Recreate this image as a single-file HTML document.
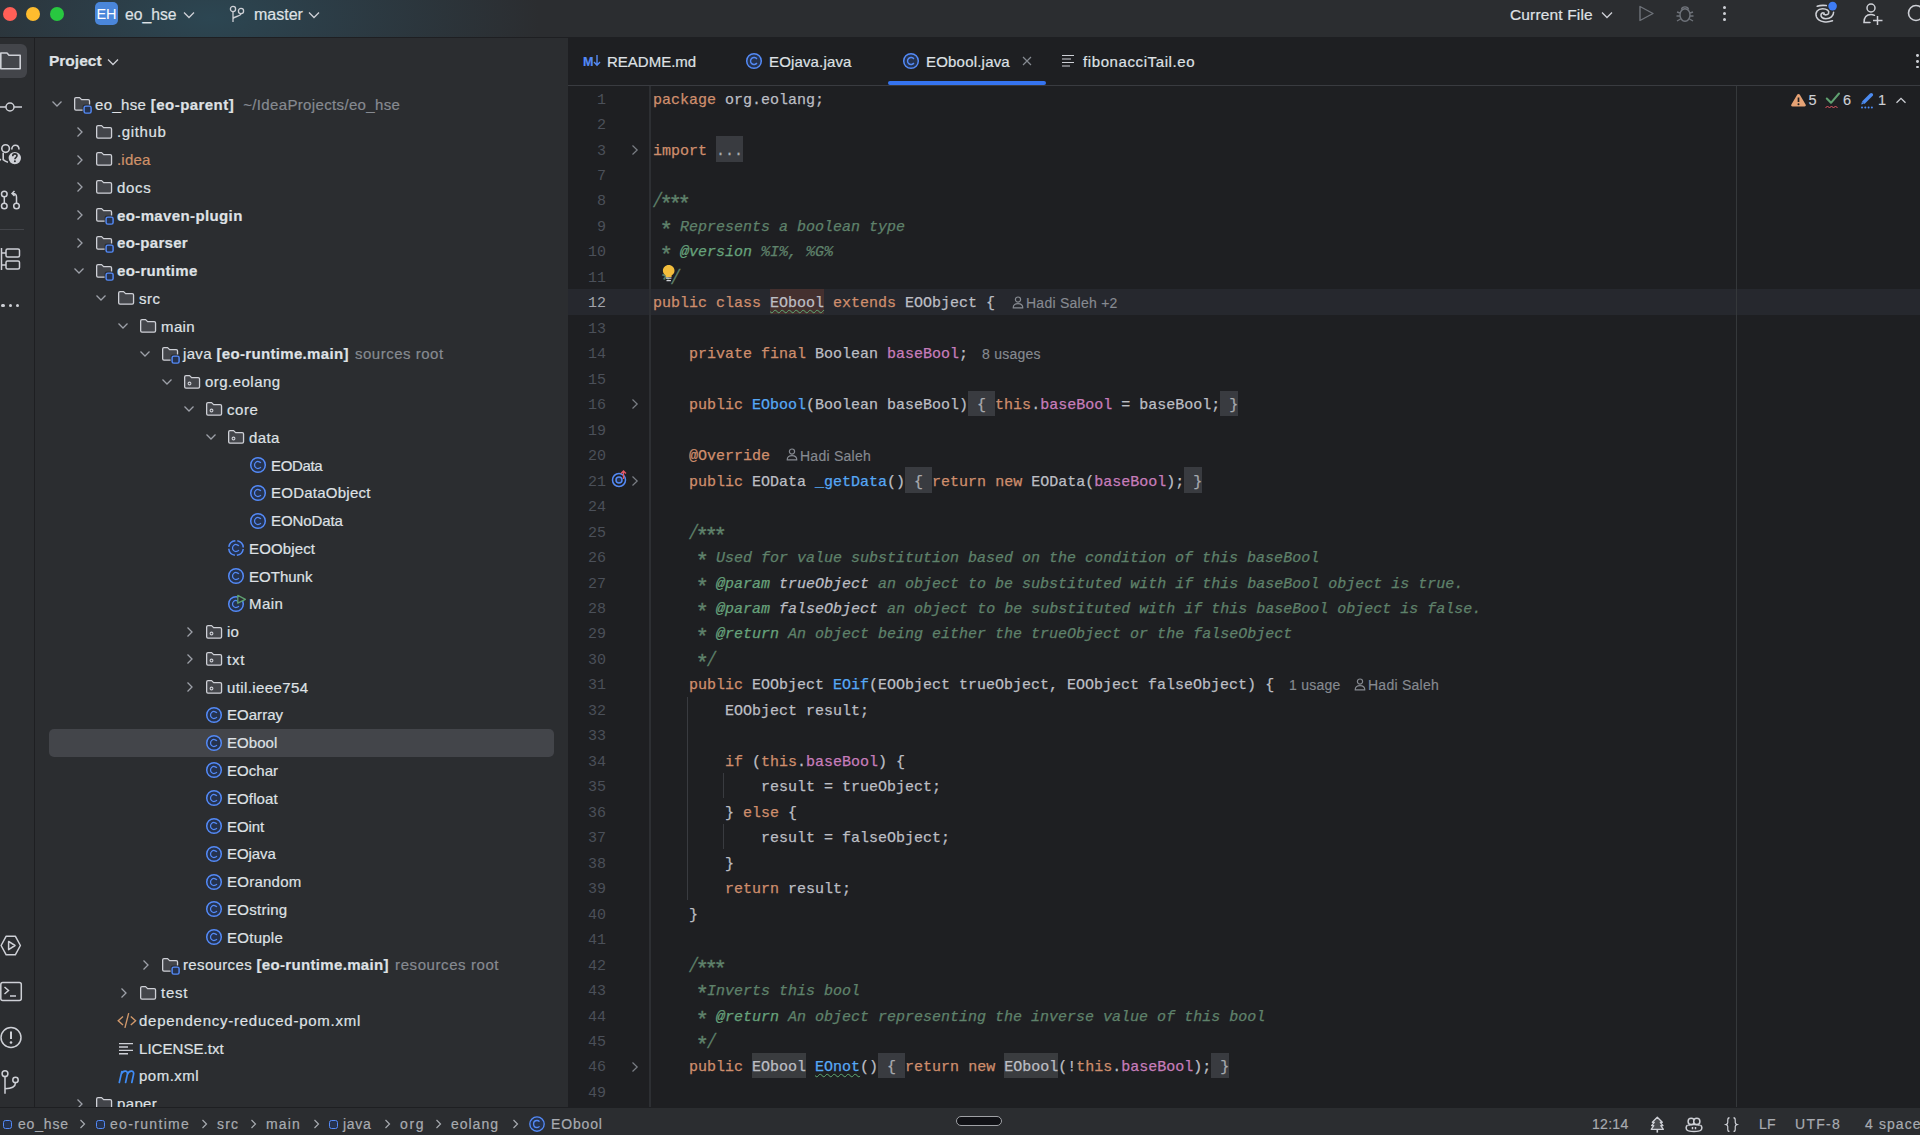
<!DOCTYPE html><html><head><meta charset="utf-8"><style>
*{margin:0;padding:0;box-sizing:border-box}
html,body{width:1920px;height:1135px;overflow:hidden;background:#2B2D30;font-family:"Liberation Sans", sans-serif;}
.a{position:absolute}
svg{position:absolute;overflow:visible}
.t{position:absolute;white-space:pre;color:#DFE1E5;font-size:15px;line-height:20px;-webkit-text-stroke:0.2px currentColor}
.m{position:absolute;white-space:pre;font-family:"Liberation Mono", monospace;font-size:15px;line-height:20px;color:#BCBEC4;-webkit-text-stroke:0.25px currentColor}
.kw{color:#CF8E6D}
.dc{color:#5F826B;font-style:italic}
.dt{color:#67A37C;font-style:italic}
.dp{color:#BCBEC4;font-style:italic}
.fn{color:#56A8F5}
.ast{display:inline-block;font-style:normal;transform:translate(-0.3px,4.6px) scale(1.45)}
.sl{display:inline-block;transform:translateY(1.3px) scaleY(1.3)}
.fd{color:#C77DBB}
.fo{background:#393B41;color:#7A7E85}
.hl{background:#373B39}
.ln{position:absolute;white-space:pre;font-family:"Liberation Mono", monospace;font-size:15px;line-height:20px;color:#4B5059;text-align:right;width:40px}
.ih{position:absolute;white-space:pre;font-family:"Liberation Sans", sans-serif;font-size:14px;line-height:20px;color:#868A91;-webkit-text-stroke:0.15px currentColor}
.g{color:#868A91}
.b{font-weight:bold}
</style></head><body>
<div class="a" style="left:0;top:0;width:1920px;height:37px;background:#2B2D30"></div>
<div class="a" style="left:0;top:0;width:1100px;height:37px;background:radial-gradient(ellipse 330px 140px at 210px 18px, rgba(44,70,82,1) 0%, rgba(44,64,75,0.8) 38%, rgba(43,45,48,0) 100%)"></div>
<div class="a" style="left:0;top:37px;width:1920px;height:1px;background:#1E1F22"></div>
<div class="a" style="left:3px;top:6.5px;width:14px;height:14px;border-radius:50%;background:#FF5F57"></div>
<div class="a" style="left:26px;top:6.5px;width:14px;height:14px;border-radius:50%;background:#FEBC2E"></div>
<div class="a" style="left:50px;top:6.5px;width:14px;height:14px;border-radius:50%;background:#28C840"></div>
<div class="a" style="left:95px;top:2px;width:23px;height:23px;border-radius:5px;background:#4A86DA;color:#fff;font-size:14.5px;line-height:25px;text-align:center;font-family:"Liberation Sans", sans-serif;letter-spacing:-0.3px">EH</div>
<div class="t" style="left:125px;top:5px;font-size:15.7px">eo_hse</div>
<svg style="left:183px;top:11px" width="12" height="8" viewBox="0 0 12 8" ><path d="M1 1.5 L6 6.5 L11 1.5" fill="none" stroke="#CED0D6" stroke-width="1.3"/></svg>
<svg style="left:229px;top:5px" width="16" height="18" viewBox="0 0 16 18" ><circle cx="4" cy="4" r="2.6" fill="none" stroke="#CED0D6" stroke-width="1.3"/><circle cx="12" cy="6" r="2.6" fill="none" stroke="#CED0D6" stroke-width="1.3"/><path d="M4 6.6 V17 M12 8.6 C12 12 4 11 4 14" fill="none" stroke="#CED0D6" stroke-width="1.3"/></svg>
<div class="t" style="left:254px;top:5px;font-size:16px">master</div>
<svg style="left:308px;top:11px" width="12" height="8" viewBox="0 0 12 8" ><path d="M1 1.5 L6 6.5 L11 1.5" fill="none" stroke="#CED0D6" stroke-width="1.3"/></svg>
<div class="t" style="left:1510px;top:4.7px;font-size:15.5px;letter-spacing:0.15px">Current File</div>
<svg style="left:1601px;top:11px" width="12" height="8" viewBox="0 0 12 8" ><path d="M1 1.5 L6 6.5 L11 1.5" fill="none" stroke="#CED0D6" stroke-width="1.3"/></svg>
<svg style="left:1638px;top:5px" width="17" height="17" viewBox="0 0 17 17" ><path d="M2 1.5 L15 8.5 L2 15.5 Z" fill="none" stroke="#6F737A" stroke-width="1.4" stroke-linejoin="round"/></svg>
<svg style="left:1675px;top:4px" width="20" height="19" viewBox="0 0 20 19" ><ellipse cx="10" cy="11" rx="5" ry="6.3" fill="none" stroke="#6F737A" stroke-width="1.4"/><path d="M6.5 5.5 C7 2 13 2 13.5 5.5 M2 8 L5 9 M18 8 L15 9 M1.5 12 H5 M18.5 12 H15 M2 17 L5.5 15 M18 17 L14.5 15" fill="none" stroke="#6F737A" stroke-width="1.4"/></svg>
<div class="a" style="left:1722.5px;top:6.0px;width:3px;height:3px;border-radius:50%;background:#CED0D6"></div>
<div class="a" style="left:1722.5px;top:12.25px;width:3px;height:3px;border-radius:50%;background:#CED0D6"></div>
<div class="a" style="left:1722.5px;top:18.25px;width:3px;height:3px;border-radius:50%;background:#CED0D6"></div>
<svg style="left:1810px;top:0px" width="30" height="28" viewBox="0 0 30 28" ><path d="M7.2 6.3 C10 5.3 13 5.2 16.3 5.6 M22.5 20.8 C18 22.5 9 22.8 6.5 17 C4.7 12 8 8.8 12.5 8.8 C17 8.8 19.5 11 18.6 13.3 C17.8 15 15 15.3 13.6 14.2 M23.6 12.3 C23.6 16 20.5 18.8 15.8 18.8 C12.2 18.8 10.6 16.5 11 14.6 C11.4 12.8 13 12.4 14.2 13.2" fill="none" stroke="#CED0D6" stroke-width="1.55" stroke-linecap="round"/><circle cx="22.6" cy="6.1" r="4.3" fill="#3E7CF5"/></svg>
<svg style="left:1862px;top:3px" width="22" height="22" viewBox="0 0 22 22" ><circle cx="9" cy="5" r="4" fill="none" stroke="#CED0D6" stroke-width="1.5"/><path d="M8 19.5 H2 C2 14 5 11.5 9 11.5 C10.5 11.5 11.5 11.8 12.5 12.3" fill="none" stroke="#CED0D6" stroke-width="1.5" stroke-linecap="round"/><path d="M15.5 13 V22 M11 17.5 H20.5" fill="none" stroke="#CED0D6" stroke-width="1.5"/></svg>
<svg style="left:1900px;top:3px" width="20" height="22" viewBox="0 0 20 22" ><circle cx="16" cy="10" r="7.5" fill="none" stroke="#CED0D6" stroke-width="1.6"/></svg>
<div class="a" style="left:34px;top:38px;width:1px;height:1070px;background:#1E1F22"></div>
<div class="a" style="left:-6px;top:44px;width:33px;height:34px;border-radius:6px;background:#43454A"></div>
<svg style="left:0px;top:50px" width="24" height="22" viewBox="0 0 24 22" ><path d="M0.8 3 H7 L9 5.2 H20.2 V18.8 H0.8 Z" fill="#43454A" stroke="#CED0D6" stroke-width="1.6" stroke-linejoin="round"/></svg>
<svg style="left:0px;top:98px" width="24" height="18" viewBox="0 0 24 18" ><circle cx="10" cy="9" r="4" fill="none" stroke="#CED0D6" stroke-width="1.5"/><path d="M0 9 H6 M14 9 H22" stroke="#CED0D6" stroke-width="1.5"/></svg>
<svg style="left:0px;top:138px" width="24" height="30" viewBox="0 0 24 30" ><circle cx="5.6" cy="10.6" r="3.8" fill="none" stroke="#CED0D6" stroke-width="1.6"/><path d="M11.8 11.4 C11.8 9 13.4 7.2 15.4 7.2 C17.5 7.2 19 9 19 11.6" fill="none" stroke="#CED0D6" stroke-width="1.6"/><path d="M3.2 14.8 V21.6 C4.5 22.8 6 23.6 8 24.2 M-1 21 L1 22" fill="none" stroke="#CED0D6" stroke-width="1.6"/><circle cx="14.8" cy="20.1" r="7.6" fill="#2B2D30"/><circle cx="14.8" cy="20.1" r="6.2" fill="#CED0D6"/><path d="M12.7 18.2 C12.7 16.6 13.6 15.9 14.8 15.9 C16.1 15.9 17 16.7 17 17.8 C17 19.3 14.9 19.4 14.9 21.2" fill="none" stroke="#2B2D30" stroke-width="1.6"/><circle cx="14.9" cy="23.3" r="1" fill="#2B2D30"/></svg>
<svg style="left:0px;top:188px" width="22" height="24" viewBox="0 0 22 24" ><circle cx="4.3" cy="6" r="2.8" fill="none" stroke="#CED0D6" stroke-width="1.5"/><circle cx="4.3" cy="18" r="2.8" fill="none" stroke="#CED0D6" stroke-width="1.5"/><circle cx="16.5" cy="18" r="2.8" fill="none" stroke="#CED0D6" stroke-width="1.5"/><path d="M4.3 8.8 V15.2 M16.5 15.2 V9 C16.5 7 15.5 5.5 12.5 5.5 M14.5 3 L12 5.5 L14.5 8" fill="none" stroke="#CED0D6" stroke-width="1.5"/></svg>
<div class="a" style="left:0;top:229px;width:24px;height:1px;background:#43454A"></div>
<svg style="left:0px;top:247px" width="22" height="24" viewBox="0 0 22 24" ><path d="M1.5 1 V23 M1.5 6 H6 M1.5 18 H6" fill="none" stroke="#CED0D6" stroke-width="1.5"/><rect x="6" y="2" width="13.5" height="8" rx="1.5" fill="none" stroke="#CED0D6" stroke-width="1.5"/><rect x="6" y="14" width="13.5" height="8" rx="1.5" fill="none" stroke="#CED0D6" stroke-width="1.5"/></svg>
<div class="a" style="left:1.4px;top:303.8px;width:3.2px;height:3.2px;border-radius:50%;background:#CED0D6"></div>
<div class="a" style="left:8.9px;top:303.8px;width:3.2px;height:3.2px;border-radius:50%;background:#CED0D6"></div>
<div class="a" style="left:15.9px;top:303.8px;width:3.2px;height:3.2px;border-radius:50%;background:#CED0D6"></div>
<svg style="left:0px;top:934px" width="24" height="24" viewBox="0 0 24 24" ><path d="M6.2 2.2 H15.3 L20.4 11.5 L15.3 20.8 H6.2 L1.1 11.5 Z" fill="none" stroke="#CED0D6" stroke-width="1.5" stroke-linejoin="round"/><path d="M8.6 7.4 L15 11.5 L8.6 15.6 Z" fill="none" stroke="#CED0D6" stroke-width="1.5" stroke-linejoin="round"/></svg>
<svg style="left:0px;top:981px" width="24" height="22" viewBox="0 0 24 22" ><rect x="0.8" y="1.5" width="20.5" height="18" rx="2" fill="none" stroke="#CED0D6" stroke-width="1.5"/><path d="M4.5 6 L8.5 9.5 L4.5 13 M10 15 H16" fill="none" stroke="#CED0D6" stroke-width="1.5"/></svg>
<svg style="left:0px;top:1026px" width="24" height="24" viewBox="0 0 24 24" ><circle cx="11" cy="11.5" r="10" fill="none" stroke="#CED0D6" stroke-width="1.5"/><path d="M11 5.5 V13" stroke="#CED0D6" stroke-width="2"/><circle cx="11" cy="16.5" r="1.3" fill="#CED0D6"/></svg>
<svg style="left:0px;top:1066px" width="24" height="30" viewBox="0 0 24 30" ><circle cx="5" cy="7.7" r="2.9" fill="none" stroke="#CED0D6" stroke-width="1.5"/><circle cx="15.5" cy="13.9" r="2.7" fill="none" stroke="#CED0D6" stroke-width="1.5"/><path d="M5 10.6 V27.7 M15.5 16.6 C15.5 20.5 12.5 22.8 5 22.8" fill="none" stroke="#CED0D6" stroke-width="1.5"/></svg>
<div class="t b" style="left:49px;top:51px;font-size:15.5px">Project</div>
<svg style="left:107px;top:58px" width="12" height="8" viewBox="0 0 12 8" ><path d="M1 1.5 L6 6.5 L11 1.5" fill="none" stroke="#CED0D6" stroke-width="1.3"/></svg>
<div class="a" style="left:49px;top:728.71px;width:505px;height:28px;border-radius:5px;background:#43454A"></div>
<svg style="left:51px;top:100.0px" width="12" height="8" viewBox="0 0 12 8" ><path d="M1.5 1.5 L6 6 L10.5 1.5" fill="none" stroke="#9DA0A8" stroke-width="1.3"/></svg>
<svg style="left:74px;top:96.9px" width="18" height="18" viewBox="0 0 18 18" ><path d="M0.65 2 Q0.65 0.65 2 0.65 H5.6 L7.6 2.6 H14.2 Q15.55 2.6 15.55 4 V11.8 Q15.55 13.15 14.2 13.15 H2 Q0.65 13.15 0.65 11.8 Z" fill="#43454A" stroke="#CED0D6" stroke-width="1.3" stroke-linejoin="round"/><rect x="8.6" y="7.6" width="10" height="10" rx="2" fill="#2B2D30"/><rect x="10.1" y="9.1" width="7" height="7" rx="1.7" fill="#25324D" stroke="#548AF7" stroke-width="1.45"/></svg>
<div class="t" style="left:95px;top:94.50px;letter-spacing:0.35px">eo_hse <span class="b" style="letter-spacing:0.45px">[eo-parent]</span><span class="g">  ~/IdeaProjects/eo_hse</span></div>
<svg style="left:75.7px;top:125.77000000000001px" width="8" height="12" viewBox="0 0 8 12" ><path d="M1.5 1.5 L6 6 L1.5 10.5" fill="none" stroke="#9DA0A8" stroke-width="1.3"/></svg>
<svg style="left:96px;top:124.67000000000002px" width="18" height="18" viewBox="0 0 18 18" ><path d="M0.65 2 Q0.65 0.65 2 0.65 H5.6 L7.6 2.6 H14.2 Q15.55 2.6 15.55 4 V11.8 Q15.55 13.15 14.2 13.15 H2 Q0.65 13.15 0.65 11.8 Z" fill="#43454A" stroke="#CED0D6" stroke-width="1.3" stroke-linejoin="round"/></svg>
<div class="t" style="left:117px;top:122.27px;letter-spacing:0.65px">.github</div>
<svg style="left:75.7px;top:153.54px" width="8" height="12" viewBox="0 0 8 12" ><path d="M1.5 1.5 L6 6 L1.5 10.5" fill="none" stroke="#9DA0A8" stroke-width="1.3"/></svg>
<svg style="left:96px;top:152.44px" width="18" height="18" viewBox="0 0 18 18" ><path d="M0.65 2 Q0.65 0.65 2 0.65 H5.6 L7.6 2.6 H14.2 Q15.55 2.6 15.55 4 V11.8 Q15.55 13.15 14.2 13.15 H2 Q0.65 13.15 0.65 11.8 Z" fill="#43454A" stroke="#CED0D6" stroke-width="1.3" stroke-linejoin="round"/></svg>
<div class="t" style="left:117px;top:150.04px;letter-spacing:0.2px"><span style="color:#D0926A">.idea</span></div>
<svg style="left:75.7px;top:181.31px" width="8" height="12" viewBox="0 0 8 12" ><path d="M1.5 1.5 L6 6 L1.5 10.5" fill="none" stroke="#9DA0A8" stroke-width="1.3"/></svg>
<svg style="left:96px;top:180.21px" width="18" height="18" viewBox="0 0 18 18" ><path d="M0.65 2 Q0.65 0.65 2 0.65 H5.6 L7.6 2.6 H14.2 Q15.55 2.6 15.55 4 V11.8 Q15.55 13.15 14.2 13.15 H2 Q0.65 13.15 0.65 11.8 Z" fill="#43454A" stroke="#CED0D6" stroke-width="1.3" stroke-linejoin="round"/></svg>
<div class="t" style="left:117px;top:177.81px;letter-spacing:0.68px">docs</div>
<svg style="left:75.7px;top:209.07999999999998px" width="8" height="12" viewBox="0 0 8 12" ><path d="M1.5 1.5 L6 6 L1.5 10.5" fill="none" stroke="#9DA0A8" stroke-width="1.3"/></svg>
<svg style="left:96px;top:207.98px" width="18" height="18" viewBox="0 0 18 18" ><path d="M0.65 2 Q0.65 0.65 2 0.65 H5.6 L7.6 2.6 H14.2 Q15.55 2.6 15.55 4 V11.8 Q15.55 13.15 14.2 13.15 H2 Q0.65 13.15 0.65 11.8 Z" fill="#43454A" stroke="#CED0D6" stroke-width="1.3" stroke-linejoin="round"/><rect x="8.6" y="7.6" width="10" height="10" rx="2" fill="#2B2D30"/><rect x="10.1" y="9.1" width="7" height="7" rx="1.7" fill="#25324D" stroke="#548AF7" stroke-width="1.45"/></svg>
<div class="t" style="left:117px;top:205.58px;letter-spacing:0.38px"><span class="b" style="letter-spacing:0.38px">eo-maven-plugin</span></div>
<svg style="left:75.7px;top:236.85px" width="8" height="12" viewBox="0 0 8 12" ><path d="M1.5 1.5 L6 6 L1.5 10.5" fill="none" stroke="#9DA0A8" stroke-width="1.3"/></svg>
<svg style="left:96px;top:235.75px" width="18" height="18" viewBox="0 0 18 18" ><path d="M0.65 2 Q0.65 0.65 2 0.65 H5.6 L7.6 2.6 H14.2 Q15.55 2.6 15.55 4 V11.8 Q15.55 13.15 14.2 13.15 H2 Q0.65 13.15 0.65 11.8 Z" fill="#43454A" stroke="#CED0D6" stroke-width="1.3" stroke-linejoin="round"/><rect x="8.6" y="7.6" width="10" height="10" rx="2" fill="#2B2D30"/><rect x="10.1" y="9.1" width="7" height="7" rx="1.7" fill="#25324D" stroke="#548AF7" stroke-width="1.45"/></svg>
<div class="t" style="left:117px;top:233.35px;letter-spacing:0.29px"><span class="b" style="letter-spacing:0.29px">eo-parser</span></div>
<svg style="left:73px;top:266.62px" width="12" height="8" viewBox="0 0 12 8" ><path d="M1.5 1.5 L6 6 L10.5 1.5" fill="none" stroke="#9DA0A8" stroke-width="1.3"/></svg>
<svg style="left:96px;top:263.52px" width="18" height="18" viewBox="0 0 18 18" ><path d="M0.65 2 Q0.65 0.65 2 0.65 H5.6 L7.6 2.6 H14.2 Q15.55 2.6 15.55 4 V11.8 Q15.55 13.15 14.2 13.15 H2 Q0.65 13.15 0.65 11.8 Z" fill="#43454A" stroke="#CED0D6" stroke-width="1.3" stroke-linejoin="round"/><rect x="8.6" y="7.6" width="10" height="10" rx="2" fill="#2B2D30"/><rect x="10.1" y="9.1" width="7" height="7" rx="1.7" fill="#25324D" stroke="#548AF7" stroke-width="1.45"/></svg>
<div class="t" style="left:117px;top:261.12px;letter-spacing:0.31px"><span class="b" style="letter-spacing:0.31px">eo-runtime</span></div>
<svg style="left:95px;top:294.39px" width="12" height="8" viewBox="0 0 12 8" ><path d="M1.5 1.5 L6 6 L10.5 1.5" fill="none" stroke="#9DA0A8" stroke-width="1.3"/></svg>
<svg style="left:118px;top:291.28999999999996px" width="18" height="18" viewBox="0 0 18 18" ><path d="M0.65 2 Q0.65 0.65 2 0.65 H5.6 L7.6 2.6 H14.2 Q15.55 2.6 15.55 4 V11.8 Q15.55 13.15 14.2 13.15 H2 Q0.65 13.15 0.65 11.8 Z" fill="#43454A" stroke="#CED0D6" stroke-width="1.3" stroke-linejoin="round"/></svg>
<div class="t" style="left:139px;top:288.89px;letter-spacing:0.5px">src</div>
<svg style="left:117px;top:322.15999999999997px" width="12" height="8" viewBox="0 0 12 8" ><path d="M1.5 1.5 L6 6 L10.5 1.5" fill="none" stroke="#9DA0A8" stroke-width="1.3"/></svg>
<svg style="left:140px;top:319.05999999999995px" width="18" height="18" viewBox="0 0 18 18" ><path d="M0.65 2 Q0.65 0.65 2 0.65 H5.6 L7.6 2.6 H14.2 Q15.55 2.6 15.55 4 V11.8 Q15.55 13.15 14.2 13.15 H2 Q0.65 13.15 0.65 11.8 Z" fill="#43454A" stroke="#CED0D6" stroke-width="1.3" stroke-linejoin="round"/></svg>
<div class="t" style="left:161px;top:316.66px;letter-spacing:0.38px">main</div>
<svg style="left:139px;top:349.93px" width="12" height="8" viewBox="0 0 12 8" ><path d="M1.5 1.5 L6 6 L10.5 1.5" fill="none" stroke="#9DA0A8" stroke-width="1.3"/></svg>
<svg style="left:162px;top:346.83px" width="18" height="18" viewBox="0 0 18 18" ><path d="M0.65 2 Q0.65 0.65 2 0.65 H5.6 L7.6 2.6 H14.2 Q15.55 2.6 15.55 4 V11.8 Q15.55 13.15 14.2 13.15 H2 Q0.65 13.15 0.65 11.8 Z" fill="#43454A" stroke="#CED0D6" stroke-width="1.3" stroke-linejoin="round"/><rect x="8.6" y="7.6" width="10" height="10" rx="2" fill="#2B2D30"/><rect x="10.1" y="9.1" width="7" height="7" rx="1.7" fill="#25324D" stroke="#548AF7" stroke-width="1.45"/></svg>
<div class="t" style="left:183px;top:344.43px;letter-spacing:0.35px">java <span class="b" style="letter-spacing:0.33px">[eo-runtime.main]</span><span class="g" style="letter-spacing:0.51px;margin-left:1.5px"> sources root</span></div>
<svg style="left:161px;top:377.7px" width="12" height="8" viewBox="0 0 12 8" ><path d="M1.5 1.5 L6 6 L10.5 1.5" fill="none" stroke="#9DA0A8" stroke-width="1.3"/></svg>
<svg style="left:184px;top:374.59999999999997px" width="18" height="18" viewBox="0 0 18 18" ><path d="M0.65 2 Q0.65 0.65 2 0.65 H5.6 L7.6 2.6 H14.2 Q15.55 2.6 15.55 4 V11.8 Q15.55 13.15 14.2 13.15 H2 Q0.65 13.15 0.65 11.8 Z" fill="#43454A" stroke="#CED0D6" stroke-width="1.3" stroke-linejoin="round"/><circle cx="5.5" cy="8.5" r="1.4" fill="none" stroke="#CED0D6" stroke-width="1.1"/></svg>
<div class="t" style="left:205px;top:372.20px;letter-spacing:0.47px">org.eolang</div>
<svg style="left:183px;top:405.46999999999997px" width="12" height="8" viewBox="0 0 12 8" ><path d="M1.5 1.5 L6 6 L10.5 1.5" fill="none" stroke="#9DA0A8" stroke-width="1.3"/></svg>
<svg style="left:206px;top:402.36999999999995px" width="18" height="18" viewBox="0 0 18 18" ><path d="M0.65 2 Q0.65 0.65 2 0.65 H5.6 L7.6 2.6 H14.2 Q15.55 2.6 15.55 4 V11.8 Q15.55 13.15 14.2 13.15 H2 Q0.65 13.15 0.65 11.8 Z" fill="#43454A" stroke="#CED0D6" stroke-width="1.3" stroke-linejoin="round"/><circle cx="5.5" cy="8.5" r="1.4" fill="none" stroke="#CED0D6" stroke-width="1.1"/></svg>
<div class="t" style="left:227px;top:399.97px;letter-spacing:0.55px">core</div>
<svg style="left:205px;top:433.24px" width="12" height="8" viewBox="0 0 12 8" ><path d="M1.5 1.5 L6 6 L10.5 1.5" fill="none" stroke="#9DA0A8" stroke-width="1.3"/></svg>
<svg style="left:228px;top:430.14px" width="18" height="18" viewBox="0 0 18 18" ><path d="M0.65 2 Q0.65 0.65 2 0.65 H5.6 L7.6 2.6 H14.2 Q15.55 2.6 15.55 4 V11.8 Q15.55 13.15 14.2 13.15 H2 Q0.65 13.15 0.65 11.8 Z" fill="#43454A" stroke="#CED0D6" stroke-width="1.3" stroke-linejoin="round"/><circle cx="5.5" cy="8.5" r="1.4" fill="none" stroke="#CED0D6" stroke-width="1.1"/></svg>
<div class="t" style="left:249px;top:427.74px;letter-spacing:0.38px">data</div>
<svg style="left:250px;top:457.01px" width="16" height="16" viewBox="0 0 16 16" ><circle cx="8" cy="8" r="7.3" fill="#25324D" stroke="#548AF7" stroke-width="1.5"/><path d="M10.9 6 A3.5 3.5 0 1 0 10.9 10" fill="none" stroke="#548AF7" stroke-width="1.25"/></svg>
<div class="t" style="left:271px;top:455.51px;letter-spacing:-0.35px">EOData</div>
<svg style="left:250px;top:484.78px" width="16" height="16" viewBox="0 0 16 16" ><circle cx="8" cy="8" r="7.3" fill="#25324D" stroke="#548AF7" stroke-width="1.5"/><path d="M10.9 6 A3.5 3.5 0 1 0 10.9 10" fill="none" stroke="#548AF7" stroke-width="1.25"/></svg>
<div class="t" style="left:271px;top:483.28px;letter-spacing:0.25px">EODataObject</div>
<svg style="left:250px;top:512.55px" width="16" height="16" viewBox="0 0 16 16" ><circle cx="8" cy="8" r="7.3" fill="#25324D" stroke="#548AF7" stroke-width="1.5"/><path d="M10.9 6 A3.5 3.5 0 1 0 10.9 10" fill="none" stroke="#548AF7" stroke-width="1.25"/></svg>
<div class="t" style="left:271px;top:511.05px;letter-spacing:-0.09px">EONoData</div>
<svg style="left:228px;top:540.3199999999999px" width="16" height="16" viewBox="0 0 16 16" ><circle cx="8" cy="8" r="7.3" fill="#25324D" stroke="#548AF7" stroke-width="1.5" stroke-dasharray="9.5 2" transform="rotate(8 8 8)"/><path d="M10.9 6 A3.5 3.5 0 1 0 10.9 10" fill="none" stroke="#548AF7" stroke-width="1.25"/></svg>
<div class="t" style="left:249px;top:538.82px;letter-spacing:0.14px">EOObject</div>
<svg style="left:228px;top:568.0899999999999px" width="16" height="16" viewBox="0 0 16 16" ><circle cx="8" cy="8" r="7.3" fill="#25324D" stroke="#548AF7" stroke-width="1.5"/><path d="M10.9 6 A3.5 3.5 0 1 0 10.9 10" fill="none" stroke="#548AF7" stroke-width="1.25"/></svg>
<div class="t" style="left:249px;top:566.59px;letter-spacing:0.02px">EOThunk</div>
<svg style="left:228px;top:595.86px" width="16" height="16" viewBox="0 0 16 16" ><circle cx="8" cy="8" r="7.3" fill="#25324D" stroke="#548AF7" stroke-width="1.5"/><path d="M10.9 6 A3.5 3.5 0 1 0 10.9 10" fill="none" stroke="#548AF7" stroke-width="1.25"/><path d="M9.8 -0.6 L17.4 3.3 L9.8 7.2 Z" fill="#2B2D30" stroke="#5FA070" stroke-width="1.3" stroke-linejoin="round"/></svg>
<div class="t" style="left:249px;top:594.36px;letter-spacing:0.42px">Main</div>
<svg style="left:185.7px;top:625.63px" width="8" height="12" viewBox="0 0 8 12" ><path d="M1.5 1.5 L6 6 L1.5 10.5" fill="none" stroke="#9DA0A8" stroke-width="1.3"/></svg>
<svg style="left:206px;top:624.53px" width="18" height="18" viewBox="0 0 18 18" ><path d="M0.65 2 Q0.65 0.65 2 0.65 H5.6 L7.6 2.6 H14.2 Q15.55 2.6 15.55 4 V11.8 Q15.55 13.15 14.2 13.15 H2 Q0.65 13.15 0.65 11.8 Z" fill="#43454A" stroke="#CED0D6" stroke-width="1.3" stroke-linejoin="round"/><circle cx="5.5" cy="8.5" r="1.4" fill="none" stroke="#CED0D6" stroke-width="1.1"/></svg>
<div class="t" style="left:227px;top:622.13px;letter-spacing:0.15px">io</div>
<svg style="left:185.7px;top:653.4px" width="8" height="12" viewBox="0 0 8 12" ><path d="M1.5 1.5 L6 6 L1.5 10.5" fill="none" stroke="#9DA0A8" stroke-width="1.3"/></svg>
<svg style="left:206px;top:652.3px" width="18" height="18" viewBox="0 0 18 18" ><path d="M0.65 2 Q0.65 0.65 2 0.65 H5.6 L7.6 2.6 H14.2 Q15.55 2.6 15.55 4 V11.8 Q15.55 13.15 14.2 13.15 H2 Q0.65 13.15 0.65 11.8 Z" fill="#43454A" stroke="#CED0D6" stroke-width="1.3" stroke-linejoin="round"/><circle cx="5.5" cy="8.5" r="1.4" fill="none" stroke="#CED0D6" stroke-width="1.1"/></svg>
<div class="t" style="left:227px;top:649.90px;letter-spacing:0.85px">txt</div>
<svg style="left:185.7px;top:681.17px" width="8" height="12" viewBox="0 0 8 12" ><path d="M1.5 1.5 L6 6 L1.5 10.5" fill="none" stroke="#9DA0A8" stroke-width="1.3"/></svg>
<svg style="left:206px;top:680.0699999999999px" width="18" height="18" viewBox="0 0 18 18" ><path d="M0.65 2 Q0.65 0.65 2 0.65 H5.6 L7.6 2.6 H14.2 Q15.55 2.6 15.55 4 V11.8 Q15.55 13.15 14.2 13.15 H2 Q0.65 13.15 0.65 11.8 Z" fill="#43454A" stroke="#CED0D6" stroke-width="1.3" stroke-linejoin="round"/><circle cx="5.5" cy="8.5" r="1.4" fill="none" stroke="#CED0D6" stroke-width="1.1"/></svg>
<div class="t" style="left:227px;top:677.67px;letter-spacing:0.4px">util.ieee754</div>
<svg style="left:206px;top:706.9399999999999px" width="16" height="16" viewBox="0 0 16 16" ><circle cx="8" cy="8" r="7.3" fill="#25324D" stroke="#548AF7" stroke-width="1.5"/><path d="M10.9 6 A3.5 3.5 0 1 0 10.9 10" fill="none" stroke="#548AF7" stroke-width="1.25"/></svg>
<div class="t" style="left:227px;top:705.44px;letter-spacing:0.03px">EOarray</div>
<svg style="left:206px;top:734.71px" width="16" height="16" viewBox="0 0 16 16" ><circle cx="8" cy="8" r="7.3" fill="#25324D" stroke="#548AF7" stroke-width="1.5"/><path d="M10.9 6 A3.5 3.5 0 1 0 10.9 10" fill="none" stroke="#548AF7" stroke-width="1.25"/></svg>
<div class="t" style="left:227px;top:733.21px;letter-spacing:0.05px">EObool</div>
<svg style="left:206px;top:762.48px" width="16" height="16" viewBox="0 0 16 16" ><circle cx="8" cy="8" r="7.3" fill="#25324D" stroke="#548AF7" stroke-width="1.5"/><path d="M10.9 6 A3.5 3.5 0 1 0 10.9 10" fill="none" stroke="#548AF7" stroke-width="1.25"/></svg>
<div class="t" style="left:227px;top:760.98px;letter-spacing:0.05px">EOchar</div>
<svg style="left:206px;top:790.25px" width="16" height="16" viewBox="0 0 16 16" ><circle cx="8" cy="8" r="7.3" fill="#25324D" stroke="#548AF7" stroke-width="1.5"/><path d="M10.9 6 A3.5 3.5 0 1 0 10.9 10" fill="none" stroke="#548AF7" stroke-width="1.25"/></svg>
<div class="t" style="left:227px;top:788.75px;letter-spacing:0.1px">EOfloat</div>
<svg style="left:206px;top:818.02px" width="16" height="16" viewBox="0 0 16 16" ><circle cx="8" cy="8" r="7.3" fill="#25324D" stroke="#548AF7" stroke-width="1.5"/><path d="M10.9 6 A3.5 3.5 0 1 0 10.9 10" fill="none" stroke="#548AF7" stroke-width="1.25"/></svg>
<div class="t" style="left:227px;top:816.52px;letter-spacing:-0.07px">EOint</div>
<svg style="left:206px;top:845.79px" width="16" height="16" viewBox="0 0 16 16" ><circle cx="8" cy="8" r="7.3" fill="#25324D" stroke="#548AF7" stroke-width="1.5"/><path d="M10.9 6 A3.5 3.5 0 1 0 10.9 10" fill="none" stroke="#548AF7" stroke-width="1.25"/></svg>
<div class="t" style="left:227px;top:844.29px;letter-spacing:-0.07px">EOjava</div>
<svg style="left:206px;top:873.56px" width="16" height="16" viewBox="0 0 16 16" ><circle cx="8" cy="8" r="7.3" fill="#25324D" stroke="#548AF7" stroke-width="1.5"/><path d="M10.9 6 A3.5 3.5 0 1 0 10.9 10" fill="none" stroke="#548AF7" stroke-width="1.25"/></svg>
<div class="t" style="left:227px;top:872.06px;letter-spacing:0.25px">EOrandom</div>
<svg style="left:206px;top:901.33px" width="16" height="16" viewBox="0 0 16 16" ><circle cx="8" cy="8" r="7.3" fill="#25324D" stroke="#548AF7" stroke-width="1.5"/><path d="M10.9 6 A3.5 3.5 0 1 0 10.9 10" fill="none" stroke="#548AF7" stroke-width="1.25"/></svg>
<div class="t" style="left:227px;top:899.83px;letter-spacing:0.26px">EOstring</div>
<svg style="left:206px;top:929.1px" width="16" height="16" viewBox="0 0 16 16" ><circle cx="8" cy="8" r="7.3" fill="#25324D" stroke="#548AF7" stroke-width="1.5"/><path d="M10.9 6 A3.5 3.5 0 1 0 10.9 10" fill="none" stroke="#548AF7" stroke-width="1.25"/></svg>
<div class="t" style="left:227px;top:927.60px;letter-spacing:0.27px">EOtuple</div>
<svg style="left:141.7px;top:958.87px" width="8" height="12" viewBox="0 0 8 12" ><path d="M1.5 1.5 L6 6 L1.5 10.5" fill="none" stroke="#9DA0A8" stroke-width="1.3"/></svg>
<svg style="left:162px;top:957.77px" width="18" height="18" viewBox="0 0 18 18" ><path d="M0.65 2 Q0.65 0.65 2 0.65 H5.6 L7.6 2.6 H14.2 Q15.55 2.6 15.55 4 V11.8 Q15.55 13.15 14.2 13.15 H2 Q0.65 13.15 0.65 11.8 Z" fill="#43454A" stroke="#CED0D6" stroke-width="1.3" stroke-linejoin="round"/><rect x="8.6" y="7.6" width="10" height="10" rx="2" fill="#2B2D30"/><rect x="10.1" y="9.1" width="7" height="7" rx="1.7" fill="#25324D" stroke="#548AF7" stroke-width="1.45"/></svg>
<div class="t" style="left:183px;top:955.37px;letter-spacing:0.35px">resources <span class="b" style="letter-spacing:0.33px">[eo-runtime.main]</span><span class="g" style="letter-spacing:0.58px;margin-left:1.5px"> resources root</span></div>
<svg style="left:119.7px;top:986.64px" width="8" height="12" viewBox="0 0 8 12" ><path d="M1.5 1.5 L6 6 L1.5 10.5" fill="none" stroke="#9DA0A8" stroke-width="1.3"/></svg>
<svg style="left:140px;top:985.54px" width="18" height="18" viewBox="0 0 18 18" ><path d="M0.65 2 Q0.65 0.65 2 0.65 H5.6 L7.6 2.6 H14.2 Q15.55 2.6 15.55 4 V11.8 Q15.55 13.15 14.2 13.15 H2 Q0.65 13.15 0.65 11.8 Z" fill="#43454A" stroke="#CED0D6" stroke-width="1.3" stroke-linejoin="round"/></svg>
<div class="t" style="left:161px;top:983.14px;letter-spacing:0.78px">test</div>
<svg style="left:116.5px;top:1012.41px" width="20" height="17" viewBox="0 0 20 17" ><path d="M6 4.5 L1.2 8.8 L6 13.1 M13.8 4.5 L18.6 8.8 L13.8 13.1 M11.7 1.2 L7.9 15.8" fill="none" stroke="#D39A6C" stroke-width="1.35"/></svg>
<div class="t" style="left:139px;top:1010.91px;letter-spacing:0.75px">dependency-reduced-pom.xml</div>
<svg style="left:118px;top:1040.1799999999998px" width="18" height="16" viewBox="0 0 18 16" ><path d="M1 3.6 H15 M1 7 H10 M1 10.4 H15 M1 13.7 H10" fill="none" stroke="#CED0D6" stroke-width="1.35"/></svg>
<div class="t" style="left:139px;top:1038.68px;letter-spacing:0.05px">LICENSE.txt</div>
<svg style="left:117.5px;top:1067.9499999999998px" width="19" height="16" viewBox="0 0 19 16" ><path d="M1.3 14.5 L3.8 3.6 M3.2 6.3 C4.2 3.8 6 3 7.6 3.2 C9.2 3.4 9.8 4.8 9.3 6.6 L7.6 14.5 M9.3 6.6 C10.3 3.9 12.2 3 13.8 3.2 C15.4 3.4 16 4.8 15.5 6.6 L13.8 14.5" fill="none" stroke="#3F8CF6" stroke-width="1.7" stroke-linecap="round" stroke-linejoin="round"/></svg>
<div class="t" style="left:139px;top:1066.45px;letter-spacing:0.5px">pom.xml</div>
<svg style="left:75.7px;top:1097.72px" width="8" height="12" viewBox="0 0 8 12" ><path d="M1.5 1.5 L6 6 L1.5 10.5" fill="none" stroke="#9DA0A8" stroke-width="1.3"/></svg>
<svg style="left:96px;top:1096.6200000000001px" width="18" height="18" viewBox="0 0 18 18" ><path d="M0.65 2 Q0.65 0.65 2 0.65 H5.6 L7.6 2.6 H14.2 Q15.55 2.6 15.55 4 V11.8 Q15.55 13.15 14.2 13.15 H2 Q0.65 13.15 0.65 11.8 Z" fill="#43454A" stroke="#CED0D6" stroke-width="1.3" stroke-linejoin="round"/></svg>
<div class="t" style="left:117px;top:1094.22px;letter-spacing:0.35px">paper</div>
<div class="a" style="left:568px;top:38px;width:1352px;height:1070px;background:#1E1F22"></div>
<div class="a" style="left:568px;top:85px;width:1352px;height:1px;background:#393B40"></div>
<div class="a" style="left:887.5px;top:81.2px;width:158.5px;height:4px;border-radius:2px;background:#3574F0"></div>
<div class="t b" style="left:583px;top:52px;font-size:12.5px;color:#548AF7">M</div>
<svg style="left:593px;top:54px" width="8" height="14" viewBox="0 0 8 14" ><path d="M4 1 V11 M1 8 L4 11.2 L7 8" fill="none" stroke="#548AF7" stroke-width="1.4"/></svg>
<div class="t" style="left:607px;top:52px">README.md</div>
<svg style="left:746px;top:53px" width="16" height="16" viewBox="0 0 16 16" ><circle cx="8" cy="8" r="7.3" fill="#25324D" stroke="#548AF7" stroke-width="1.5"/><path d="M10.9 6 A3.5 3.5 0 1 0 10.9 10" fill="none" stroke="#548AF7" stroke-width="1.4"/></svg>
<div class="t" style="left:769px;top:52px;letter-spacing:0.15px">EOjava.java</div>
<svg style="left:903px;top:53px" width="16" height="16" viewBox="0 0 16 16" ><circle cx="8" cy="8" r="7.3" fill="#25324D" stroke="#548AF7" stroke-width="1.5"/><path d="M10.9 6 A3.5 3.5 0 1 0 10.9 10" fill="none" stroke="#548AF7" stroke-width="1.4"/></svg>
<div class="t" style="left:926px;top:52px;letter-spacing:0.2px">EObool.java</div>
<svg style="left:1022px;top:56px" width="10" height="10" viewBox="0 0 10 10" ><path d="M1 1 L9 9 M9 1 L1 9" stroke="#868A91" stroke-width="1.2"/></svg>
<svg style="left:1061px;top:54px" width="16" height="14" viewBox="0 0 16 14" ><path d="M1 1.5 H13 M1 5 H10 M1 8.5 H13 M1 12 H9" fill="none" stroke="#CED0D6" stroke-width="1.2"/></svg>
<div class="t" style="left:1083px;top:52px;letter-spacing:0.6px">fibonacciTail.eo</div>
<div class="a" style="left:1916.3px;top:54.1px;width:2.8px;height:2.8px;border-radius:50%;background:#CED0D6"></div>
<div class="a" style="left:1916.3px;top:59.800000000000004px;width:2.8px;height:2.8px;border-radius:50%;background:#CED0D6"></div>
<div class="a" style="left:1916.3px;top:65.6px;width:2.8px;height:2.8px;border-radius:50%;background:#CED0D6"></div>
<div class="a" style="left:649px;top:86px;width:2px;height:1022px;background:#2D2F33"></div>
<div class="a" style="left:1736px;top:86px;width:1px;height:1022px;background:#313438"></div>
<div class="a" style="left:568px;top:289.06px;width:1352px;height:25.7px;background:#26282E"></div>
<div class="a" style="left:1736px;top:86px;width:1px;height:1022px;background:#35383B"></div>
<div class="a" style="left:649px;top:86px;width:2px;height:1022px;background:#2D2F33"></div>
<div class="a" style="left:687px;top:696.58px;width:1px;height:203.76px;background:#393B40"></div>
<div class="a" style="left:723px;top:772.99px;width:1px;height:25.47px;background:#393B40"></div>
<div class="a" style="left:723px;top:823.93px;width:1px;height:25.47px;background:#393B40"></div>
<div class="ln" style="left:566px;top:90.60px;color:#4B5059">1</div>
<div class="m" style="left:653px;top:90.60px"><span class="kw">package</span> org.eolang;</div>
<div class="ln" style="left:566px;top:116.07px;color:#4B5059">2</div>
<div class="ln" style="left:566px;top:141.54px;color:#4B5059">3</div>
<div class="a" style="left:716.0px;top:136.34px;width:27.0px;height:25.2px;background:#393B40"></div>
<div class="m" style="left:653px;top:141.54px"><span class="kw">import</span> <span style="color:#A9ABB0">...</span></div>
<div class="ln" style="left:566px;top:167.01px;color:#4B5059">7</div>
<div class="ln" style="left:566px;top:192.48px;color:#4B5059">8</div>
<div class="m" style="left:653px;top:192.48px"><span class="dc"><span class="sl">/</span><span class="ast">*</span><span class="ast">*</span><span class="ast">*</span></span></div>
<div class="ln" style="left:566px;top:217.95px;color:#4B5059">9</div>
<div class="m" style="left:653px;top:217.95px"><span class="dc"> <span class="ast">*</span> Represents a boolean type</span></div>
<div class="ln" style="left:566px;top:243.42px;color:#4B5059">10</div>
<div class="m" style="left:653px;top:243.42px"><span class="dc"> <span class="ast">*</span> </span><span class="dt">@version</span><span class="dc"> %I%, %G%</span></div>
<div class="ln" style="left:566px;top:268.89px;color:#4B5059">11</div>
<div class="m" style="left:653px;top:268.89px"><span class="dc"> <span class="ast">*</span><span class="sl">/</span></span></div>
<div class="ln" style="left:566px;top:294.36px;color:#A1A3AB">12</div>
<div class="a" style="left:770.0px;top:289.16px;width:54.0px;height:25.2px;background:#44302F"></div>
<div class="m" style="left:653px;top:294.36px"><span class="kw">public</span> <span class="kw">class</span> <span style="text-decoration:underline wavy #5FAA74;text-decoration-thickness:1.2px;text-underline-offset:1.5px">EObool</span> <span class="kw">extends</span> EOObject {</div>
<div class="ln" style="left:566px;top:319.83px;color:#4B5059">13</div>
<div class="ln" style="left:566px;top:345.30px;color:#4B5059">14</div>
<div class="m" style="left:653px;top:345.30px">    <span class="kw">private</span> <span class="kw">final</span> Boolean <span class="fd">baseBool</span>;</div>
<div class="ln" style="left:566px;top:370.77px;color:#4B5059">15</div>
<div class="ln" style="left:566px;top:396.24px;color:#4B5059">16</div>
<div class="a" style="left:968.0px;top:391.04px;width:27.0px;height:25.2px;background:#393B40"></div>
<div class="a" style="left:1220.0px;top:391.04px;width:18.0px;height:25.2px;background:#393B40"></div>
<div class="m" style="left:653px;top:396.24px">    <span class="kw">public</span> <span class="fn">EObool</span>(Boolean baseBool)<span style="color:#A9ABB0"> { </span><span class="kw">this</span>.<span class="fd">baseBool</span> = baseBool;<span style="color:#A9ABB0"> }</span></div>
<div class="ln" style="left:566px;top:421.71px;color:#4B5059">19</div>
<div class="ln" style="left:566px;top:447.18px;color:#4B5059">20</div>
<div class="m" style="left:653px;top:447.18px">    <span class="kw">@Override</span></div>
<div class="ln" style="left:566px;top:472.65px;color:#4B5059">21</div>
<div class="a" style="left:905.0px;top:467.45px;width:27.0px;height:25.2px;background:#393B40"></div>
<div class="a" style="left:1184.0px;top:467.45px;width:18.0px;height:25.2px;background:#393B40"></div>
<div class="m" style="left:653px;top:472.65px">    <span class="kw">public</span> EOData <span class="fn">_getData</span>()<span style="color:#A9ABB0"> { </span><span class="kw">return</span> <span class="kw">new</span> EOData(<span class="fd">baseBool</span>);<span style="color:#A9ABB0"> }</span></div>
<div class="ln" style="left:566px;top:498.12px;color:#4B5059">24</div>
<div class="ln" style="left:566px;top:523.59px;color:#4B5059">25</div>
<div class="m" style="left:653px;top:523.59px"><span class="dc">    <span class="sl">/</span><span class="ast">*</span><span class="ast">*</span><span class="ast">*</span></span></div>
<div class="ln" style="left:566px;top:549.06px;color:#4B5059">26</div>
<div class="m" style="left:653px;top:549.06px"><span class="dc">     <span class="ast">*</span> Used for value substitution based on the condition of this baseBool</span></div>
<div class="ln" style="left:566px;top:574.53px;color:#4B5059">27</div>
<div class="m" style="left:653px;top:574.53px"><span class="dc">     <span class="ast">*</span> </span><span class="dt">@param</span> <span class="dp">trueObject</span><span class="dc"> an object to be substituted with if this baseBool object is true.</span></div>
<div class="ln" style="left:566px;top:600.00px;color:#4B5059">28</div>
<div class="m" style="left:653px;top:600.00px"><span class="dc">     <span class="ast">*</span> </span><span class="dt">@param</span> <span class="dp">falseObject</span><span class="dc"> an object to be substituted with if this baseBool object is false.</span></div>
<div class="ln" style="left:566px;top:625.47px;color:#4B5059">29</div>
<div class="m" style="left:653px;top:625.47px"><span class="dc">     <span class="ast">*</span> </span><span class="dt">@return</span><span class="dc"> An object being either the trueObject or the falseObject</span></div>
<div class="ln" style="left:566px;top:650.94px;color:#4B5059">30</div>
<div class="m" style="left:653px;top:650.94px"><span class="dc">     <span class="ast">*</span><span class="sl">/</span></span></div>
<div class="ln" style="left:566px;top:676.41px;color:#4B5059">31</div>
<div class="m" style="left:653px;top:676.41px">    <span class="kw">public</span> EOObject <span class="fn">EOif</span>(EOObject trueObject, EOObject falseObject) {</div>
<div class="ln" style="left:566px;top:701.88px;color:#4B5059">32</div>
<div class="m" style="left:653px;top:701.88px">        EOObject result;</div>
<div class="ln" style="left:566px;top:727.35px;color:#4B5059">33</div>
<div class="ln" style="left:566px;top:752.82px;color:#4B5059">34</div>
<div class="m" style="left:653px;top:752.82px">        <span class="kw">if</span> (<span class="kw">this</span>.<span class="fd">baseBool</span>) {</div>
<div class="ln" style="left:566px;top:778.29px;color:#4B5059">35</div>
<div class="m" style="left:653px;top:778.29px">            result = trueObject;</div>
<div class="ln" style="left:566px;top:803.76px;color:#4B5059">36</div>
<div class="m" style="left:653px;top:803.76px">        } <span class="kw">else</span> {</div>
<div class="ln" style="left:566px;top:829.23px;color:#4B5059">37</div>
<div class="m" style="left:653px;top:829.23px">            result = falseObject;</div>
<div class="ln" style="left:566px;top:854.70px;color:#4B5059">38</div>
<div class="m" style="left:653px;top:854.70px">        }</div>
<div class="ln" style="left:566px;top:880.17px;color:#4B5059">39</div>
<div class="m" style="left:653px;top:880.17px">        <span class="kw">return</span> result;</div>
<div class="ln" style="left:566px;top:905.64px;color:#4B5059">40</div>
<div class="m" style="left:653px;top:905.64px">    }</div>
<div class="ln" style="left:566px;top:931.11px;color:#4B5059">41</div>
<div class="ln" style="left:566px;top:956.58px;color:#4B5059">42</div>
<div class="m" style="left:653px;top:956.58px"><span class="dc">    <span class="sl">/</span><span class="ast">*</span><span class="ast">*</span><span class="ast">*</span></span></div>
<div class="ln" style="left:566px;top:982.05px;color:#4B5059">43</div>
<div class="m" style="left:653px;top:982.05px"><span class="dc">     <span class="ast">*</span>Inverts this bool</span></div>
<div class="ln" style="left:566px;top:1007.52px;color:#4B5059">44</div>
<div class="m" style="left:653px;top:1007.52px"><span class="dc">     <span class="ast">*</span> </span><span class="dt">@return</span><span class="dc"> An object representing the inverse value of this bool</span></div>
<div class="ln" style="left:566px;top:1032.99px;color:#4B5059">45</div>
<div class="m" style="left:653px;top:1032.99px"><span class="dc">     <span class="ast">*</span><span class="sl">/</span></span></div>
<div class="ln" style="left:566px;top:1058.46px;color:#4B5059">46</div>
<div class="a" style="left:752.0px;top:1053.26px;width:54.0px;height:25.2px;background:#3A3C3F"></div>
<div class="a" style="left:878.0px;top:1053.26px;width:27.0px;height:25.2px;background:#393B40"></div>
<div class="a" style="left:1004.0px;top:1053.26px;width:54.0px;height:25.2px;background:#3A3C3F"></div>
<div class="a" style="left:1211.0px;top:1053.26px;width:18.0px;height:25.2px;background:#393B40"></div>
<div class="m" style="left:653px;top:1058.46px">    <span class="kw">public</span> EObool <span class="fn" style="text-decoration:underline wavy #5FAA74;text-decoration-thickness:1.2px;text-underline-offset:1.5px">EOnot</span>()<span style="color:#A9ABB0"> { </span><span class="kw">return</span> <span class="kw">new</span> EObool(!<span class="kw">this</span>.<span class="fd">baseBool</span>);<span style="color:#A9ABB0"> }</span></div>
<div class="ln" style="left:566px;top:1083.93px;color:#4B5059">49</div>
<svg style="left:631px;top:143.64px" width="9" height="12" viewBox="0 0 9 12" ><path d="M1.5 1.5 L6.2 6 L1.5 10.5" fill="none" stroke="#7A7E85" stroke-width="1.2"/></svg>
<svg style="left:631px;top:398.34px" width="9" height="12" viewBox="0 0 9 12" ><path d="M1.5 1.5 L6.2 6 L1.5 10.5" fill="none" stroke="#7A7E85" stroke-width="1.2"/></svg>
<svg style="left:631px;top:474.74999999999994px" width="9" height="12" viewBox="0 0 9 12" ><path d="M1.5 1.5 L6.2 6 L1.5 10.5" fill="none" stroke="#7A7E85" stroke-width="1.2"/></svg>
<svg style="left:631px;top:1060.56px" width="9" height="12" viewBox="0 0 9 12" ><path d="M1.5 1.5 L6.2 6 L1.5 10.5" fill="none" stroke="#7A7E85" stroke-width="1.2"/></svg>
<svg style="left:611px;top:469.04999999999995px" width="20" height="20" viewBox="0 0 20 20" ><circle cx="8" cy="11" r="6.5" fill="none" stroke="#548AF7" stroke-width="1.5"/><circle cx="8" cy="11" r="3" fill="#25324D" stroke="#548AF7" stroke-width="1.5"/><path d="M12.5 10 V2 M10 4.5 L12.5 2 L15 4.5" fill="none" stroke="#E55765" stroke-width="1.3"/></svg>
<svg style="left:660px;top:264.09px" width="18" height="20" viewBox="0 0 18 20" ><path d="M8.7 1 C12 1 14.5 3.5 14.5 6.8 C14.5 9 13.3 10.5 11.6 11.5 V13 H5.8 V11.5 C4.1 10.5 2.9 9 2.9 6.8 C2.9 3.5 5.4 1 8.7 1 Z" fill="#F2BD3C"/><path d="M6 14.2 H11.4 M6.5 16.6 H10.9" fill="none" stroke="#CED0D6" stroke-width="1.2"/></svg>
<svg style="left:1011.5px;top:295.56px" width="12" height="14" viewBox="0 0 12 14" ><circle cx="6" cy="3.6" r="2.6" fill="none" stroke="#868A91" stroke-width="1.2"/><path d="M1.2 11.9 C1.2 9 3 7.6 6 7.6 C9 7.6 10.8 9 10.8 11.9 Z" fill="none" stroke="#868A91" stroke-width="1.2" stroke-linejoin="round"/></svg>
<div class="ih" style="left:1026px;top:292.76px;letter-spacing:0.25px">Hadi Saleh +2</div>
<div class="ih" style="left:982px;top:343.70px;letter-spacing:0.25px">8 usages</div>
<svg style="left:785.5px;top:448.38px" width="12" height="14" viewBox="0 0 12 14" ><circle cx="6" cy="3.6" r="2.6" fill="none" stroke="#868A91" stroke-width="1.2"/><path d="M1.2 11.9 C1.2 9 3 7.6 6 7.6 C9 7.6 10.8 9 10.8 11.9 Z" fill="none" stroke="#868A91" stroke-width="1.2" stroke-linejoin="round"/></svg>
<div class="ih" style="left:800px;top:445.58px;letter-spacing:0.25px">Hadi Saleh</div>
<div class="ih" style="left:1289px;top:674.81px;letter-spacing:0.25px">1 usage</div>
<svg style="left:1353.5px;top:677.6099999999999px" width="12" height="14" viewBox="0 0 12 14" ><circle cx="6" cy="3.6" r="2.6" fill="none" stroke="#868A91" stroke-width="1.2"/><path d="M1.2 11.9 C1.2 9 3 7.6 6 7.6 C9 7.6 10.8 9 10.8 11.9 Z" fill="none" stroke="#868A91" stroke-width="1.2" stroke-linejoin="round"/></svg>
<div class="ih" style="left:1368px;top:674.81px;letter-spacing:0.25px">Hadi Saleh</div>
<svg style="left:1790px;top:92px" width="17" height="16" viewBox="0 0 17 16" ><path d="M8.5 2 C9.2 2 9.6 2.4 10 3.1 L15.6 12.6 C16.2 13.7 15.6 14.6 14.4 14.6 H2.6 C1.4 14.6 0.8 13.7 1.4 12.6 L7 3.1 C7.4 2.4 7.8 2 8.5 2 Z" fill="#E6A275"/><path d="M8.5 5.5 V10" stroke="#1E1F22" stroke-width="1.7"/><circle cx="8.5" cy="12.3" r="1" fill="#1E1F22"/></svg>
<div class="ih" style="left:1808.5px;top:90.00px;color:#CED0D6;font-size:14.5px">5</div>
<svg style="left:1825px;top:91px" width="16" height="19" viewBox="0 0 16 19" ><path d="M1.8 7.5 L6 11.8 L14 2.5" fill="none" stroke="#5FA070" stroke-width="2" stroke-linecap="round" stroke-linejoin="round"/><path d="M0.5 17 L2.5 15 L4.5 17 L6.5 15 L8.5 17 L10.5 15 L12.5 17" fill="none" stroke="#E55765" stroke-width="1"/></svg>
<div class="ih" style="left:1843px;top:90.00px;color:#CED0D6;font-size:14.5px">6</div>
<svg style="left:1859px;top:91px" width="17" height="19" viewBox="0 0 17 19" ><path d="M5.5 13 L3 10.5 L11 2.5 C11.8 1.7 12.7 1.7 13.5 2.5 C14.3 3.3 14.3 4.2 13.5 5 Z" fill="#4C8BF0"/><path d="M3 10.8 L2.2 13.5 L5 12.8" fill="#4C8BF0"/><circle cx="3" cy="16.5" r="1" fill="#4C8BF0"/><circle cx="6.3" cy="16.5" r="1" fill="#4C8BF0"/><circle cx="9.6" cy="16.5" r="1" fill="#4C8BF0"/><circle cx="12.9" cy="16.5" r="1" fill="#4C8BF0"/></svg>
<div class="ih" style="left:1878px;top:90.00px;color:#CED0D6;font-size:14.5px">1</div>
<svg style="left:1895px;top:96px" width="12" height="8" viewBox="0 0 12 8" ><path d="M1.5 6.8 L6 2.3 L10.5 6.8" fill="none" stroke="#CED0D6" stroke-width="1.3"/></svg>
<div class="a" style="left:0;top:1107px;width:1920px;height:1px;background:#1E1F22"></div>
<div class="a" style="left:0;top:1108px;width:1920px;height:27px;background:#2B2D30"></div>
<div class="a" style="left:3px;top:1120.2px;width:9.2px;height:9.2px;border-radius:2.5px;border:1.4px solid #548AF7;background:#25324D"></div>
<div class="t" style="left:18px;top:1114px;font-size:14px;color:#A8ABB0;letter-spacing:0.82px">eo_hse</div>
<svg style="left:79px;top:1119px" width="7" height="10" viewBox="0 0 7 10" ><path d="M1.5 1 L5.5 5 L1.5 9" fill="none" stroke="#A8ABB0" stroke-width="1.2"/></svg>
<div class="a" style="left:96px;top:1120.2px;width:9.2px;height:9.2px;border-radius:2.5px;border:1.4px solid #548AF7;background:#25324D"></div>
<div class="t" style="left:110px;top:1114px;font-size:14px;color:#A8ABB0;letter-spacing:1.33px">eo-runtime</div>
<svg style="left:201px;top:1119px" width="7" height="10" viewBox="0 0 7 10" ><path d="M1.5 1 L5.5 5 L1.5 9" fill="none" stroke="#A8ABB0" stroke-width="1.2"/></svg>
<div class="t" style="left:217px;top:1114px;font-size:14px;color:#A8ABB0;letter-spacing:1.15px">src</div>
<svg style="left:250px;top:1119px" width="7" height="10" viewBox="0 0 7 10" ><path d="M1.5 1 L5.5 5 L1.5 9" fill="none" stroke="#A8ABB0" stroke-width="1.2"/></svg>
<div class="t" style="left:266px;top:1114px;font-size:14px;color:#A8ABB0;letter-spacing:1.17px">main</div>
<svg style="left:313px;top:1119px" width="7" height="10" viewBox="0 0 7 10" ><path d="M1.5 1 L5.5 5 L1.5 9" fill="none" stroke="#A8ABB0" stroke-width="1.2"/></svg>
<div class="a" style="left:329px;top:1120.2px;width:9.2px;height:9.2px;border-radius:2.5px;border:1.4px solid #548AF7;background:#25324D"></div>
<div class="t" style="left:343px;top:1114px;font-size:14px;color:#A8ABB0;letter-spacing:0.73px">java</div>
<svg style="left:384px;top:1119px" width="7" height="10" viewBox="0 0 7 10" ><path d="M1.5 1 L5.5 5 L1.5 9" fill="none" stroke="#A8ABB0" stroke-width="1.2"/></svg>
<div class="t" style="left:400px;top:1114px;font-size:14px;color:#A8ABB0;letter-spacing:1.6px">org</div>
<svg style="left:435px;top:1119px" width="7" height="10" viewBox="0 0 7 10" ><path d="M1.5 1 L5.5 5 L1.5 9" fill="none" stroke="#A8ABB0" stroke-width="1.2"/></svg>
<div class="t" style="left:451px;top:1114px;font-size:14px;color:#A8ABB0;letter-spacing:0.98px">eolang</div>
<svg style="left:512px;top:1119px" width="7" height="10" viewBox="0 0 7 10" ><path d="M1.5 1 L5.5 5 L1.5 9" fill="none" stroke="#A8ABB0" stroke-width="1.2"/></svg>
<svg style="left:529px;top:1116px" width="16" height="16" viewBox="0 0 16 16" ><circle cx="8" cy="8" r="7.2" fill="#25324D" stroke="#548AF7" stroke-width="1.35"/><path d="M10.5 5.7 C9.8 4.8 9 4.5 8 4.5 C6 4.5 4.6 6.1 4.6 8 C4.6 9.9 6 11.5 8 11.5 C9 11.5 9.8 11.2 10.5 10.3" fill="none" stroke="#548AF7" stroke-width="1.35"/></svg>
<div class="t" style="left:551px;top:1114px;font-size:14px;color:#A8ABB0;letter-spacing:0.84px">EObool</div>
<div class="a" style="left:956px;top:1116.4px;width:46px;height:9.5px;border-radius:5px;border:1.3px solid #A0A2A6;background:#111216"></div>
<div class="t" style="left:1592px;top:1114px;font-size:14px;color:#A8ABB0;letter-spacing:0.3px">12:14</div>
<svg style="left:1650px;top:1116px" width="15" height="18" viewBox="0 0 15 18" ><path d="M7.3 1.3 L2.3 6.3 H4.3 L1.6 9.6 H3.8 L1.2 13.3 H13.4 L10.8 9.6 H13 L10.3 6.3 H12.3 Z" fill="#4A4C50" stroke="#CED0D6" stroke-width="1.3" stroke-linejoin="round"/><path d="M7.3 13.3 V16.6" stroke="#CED0D6" stroke-width="1.6"/></svg>
<svg style="left:1685px;top:1116px" width="19" height="17" viewBox="0 0 19 17" ><path d="M2.6 9.2 C0.8 10.5 0.6 12.8 2.2 14.2 C4 15.8 14 15.8 15.8 14.2 C17.4 12.8 17.2 10.5 15.4 9.2" fill="#2B2D30" stroke="#CED0D6" stroke-width="1.5"/><circle cx="6.2" cy="5.4" r="3.1" fill="#2B2D30" stroke="#CED0D6" stroke-width="1.5"/><circle cx="11.8" cy="5.4" r="3.1" fill="#2B2D30" stroke="#CED0D6" stroke-width="1.5"/><path d="M3.2 9.4 C5 8.3 13 8.3 14.8 9.4" fill="none" stroke="#CED0D6" stroke-width="1.3"/><path d="M7.5 11 V13.2 M10.5 11 V13.2" stroke="#CED0D6" stroke-width="1.5"/></svg>
<svg style="left:1723px;top:1116px" width="17" height="17" viewBox="0 0 17 17" ><g transform="translate(8.5 0) scale(0.85 1) translate(-8 0)"><path d="M5.6 1.8 C4 1.8 3.6 2.5 3.6 4 V6.6 C3.6 7.6 3 8.2 1.6 8.6 C3 9 3.6 9.6 3.6 10.6 V13.2 C3.6 14.7 4 15.4 5.6 15.4 M10.4 1.8 C12 1.8 12.4 2.5 12.4 4 V6.6 C12.4 7.6 13 8.2 14.4 8.6 C13 9 12.4 9.6 12.4 10.6 V13.2 C12.4 14.7 12 15.4 10.4 15.4" fill="none" stroke="#CED0D6" stroke-width="1.4"/></g></svg>
<div class="t" style="left:1759px;top:1114px;font-size:14px;color:#A8ABB0;letter-spacing:0.3px">LF</div>
<div class="t" style="left:1795px;top:1114px;font-size:14px;color:#A8ABB0;letter-spacing:1.3px">UTF-8</div>
<div class="t" style="left:1865px;top:1114px;font-size:14px;color:#A8ABB0;letter-spacing:1.1px">4 spaces</div>
</body></html>
